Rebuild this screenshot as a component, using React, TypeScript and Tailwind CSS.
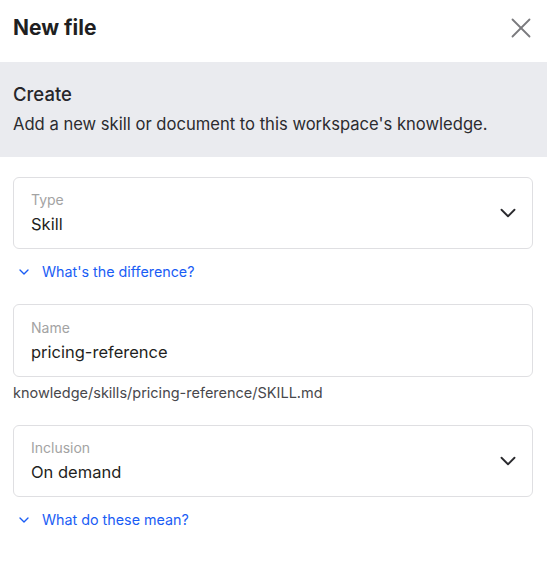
import { X, ChevronDown } from "lucide-react";

function SelectField({ label, value }: { label: string; value: string }) {
  return (
    <div className="flex items-center justify-between rounded-md border border-[#dfdfe2] bg-white pl-[17px] pr-[11px] h-[72px]">
      <div className="flex flex-col">
        <span className="text-[14px] leading-[20px] text-[#a3a3a3]">{label}</span>
        <span className="text-[16.5px] leading-[24px] text-[#1f1f22] mt-[2px]">{value}</span>
      </div>
      <ChevronDown className="w-[26px] h-[26px] text-[#2a2a2e]" strokeWidth={1.7} />
    </div>
  );
}

function HelpLink({ text }: { text: string }) {
  return (
    <button type="button" className="flex items-center gap-[10px] mt-[13px] pl-[3px] text-[#1a5df5] text-[14.3px] leading-[20px]">
      <ChevronDown className="w-[16px] h-[16px]" strokeWidth={2} />
      {text}
    </button>
  );
}

export default function App() {
  return (
    <div className="w-[547px] h-[562px] bg-white" style={{ fontFamily: "Inter, 'Noto Sans', sans-serif" }}>
      <header className="flex items-center justify-between h-[62px] pl-[13px] pr-[9px]">
        <h1 className="text-[21px] font-bold text-[#1f1f22] pb-[6px]">New file</h1>
        <X className="w-[34px] h-[34px] text-[#7a7a7e] mb-[6px]" strokeWidth={1.3} />
      </header>

      <section className="bg-[#eaebef] px-[13px] pt-[20px] h-[95px]">
        <p className="text-[18.5px] leading-[24px] font-medium text-[#26262a]">Create</p>
        <p className="text-[16.6px] leading-[22px] text-[#2c2c30] mt-[7px] whitespace-nowrap">
          Add a new skill or document to this workspace's knowledge.
        </p>
      </section>

      <div className="px-[13px] pt-[20px] pr-[14px]">
        <SelectField label="Type" value="Skill" />
        <HelpLink text="What's the difference?" />

        <div className="mt-[22px] rounded-md border border-[#dfdfe2] bg-white pl-[17px] h-[73px] flex flex-col justify-center">
          <span className="text-[14px] leading-[20px] text-[#a3a3a3]">Name</span>
          <span className="text-[16.5px] leading-[24px] text-[#1f1f22] mt-[2px]">pricing-reference</span>
        </div>
        <p className="text-[14.5px] leading-[20px] text-[#48484c] mt-[6px]">knowledge/skills/pricing-reference/SKILL.md</p>

        <div className="mt-[22px]">
          <SelectField label="Inclusion" value="On demand" />
        </div>
        <HelpLink text="What do these mean?" />
      </div>
    </div>
  );
}
